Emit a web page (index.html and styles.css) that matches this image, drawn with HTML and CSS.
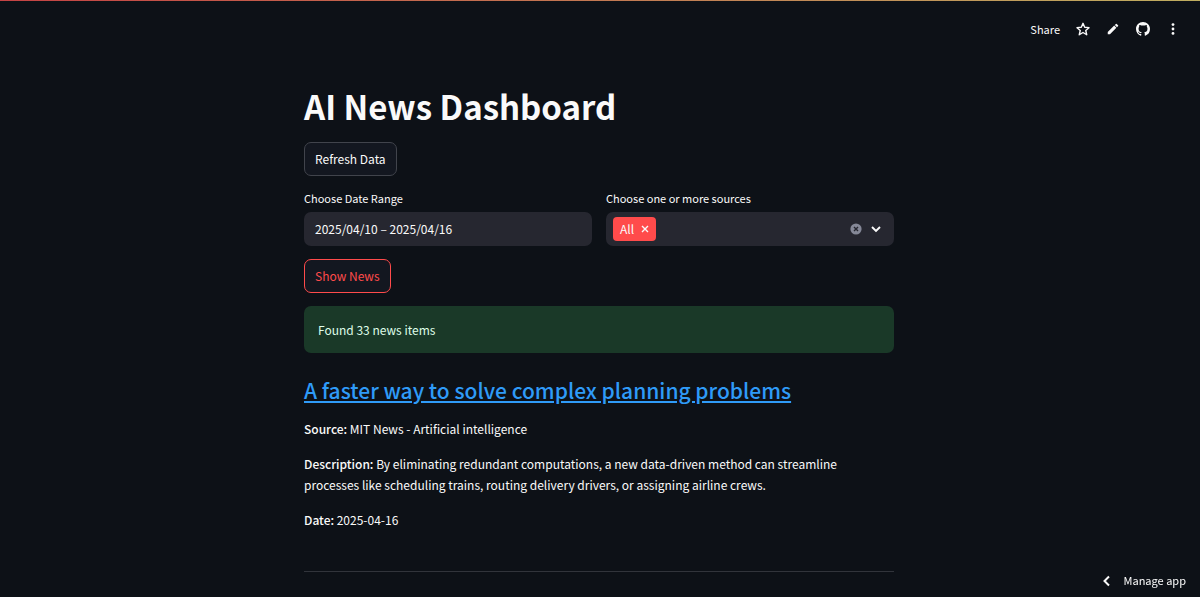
FILE: index.html
```html
<!DOCTYPE html>
<html lang="en">
<head>
<meta charset="utf-8">
<meta name="viewport" content="width=device-width, initial-scale=1">
<title>AI News Dashboard</title>
<link rel="stylesheet" href="styles.css">
</head>
<body>
<div class="decoration"></div>
<header class="toolbar">
  <button class="tool share" type="button">Share</button>
  <button class="tool" type="button" aria-label="Favorite">
    <svg width="14" height="14" viewBox="0 0 24 24" fill="none" stroke="currentColor" stroke-width="2.4" stroke-linejoin="round"><path d="M12 2.2l2.9 6.9 7.4.6-5.6 4.9 1.7 7.3-6.4-3.9-6.4 3.9 1.7-7.3-5.6-4.9 7.4-.6z"/></svg>
  </button>
  <button class="tool" type="button" aria-label="Edit">
    <svg width="14" height="14" viewBox="0 0 24 24" fill="currentColor"><path d="M3 17.2V21h3.8L17.8 9.9l-3.7-3.7zM20.7 7c.4-.4.4-1 0-1.4l-2.3-2.3a1 1 0 0 0-1.4 0l-1.9 1.8 3.8 3.8z"/></svg>
  </button>
  <button class="tool" type="button" aria-label="View source on GitHub">
    <svg width="14" height="14" viewBox="0 0 16 16" fill="currentColor"><path d="M8 0C3.58 0 0 3.58 0 8c0 3.54 2.29 6.53 5.47 7.59.4.07.55-.17.55-.38 0-.19-.01-.82-.01-1.49-2.01.37-2.53-.49-2.69-.94-.09-.23-.48-.94-.82-1.13-.28-.15-.68-.52-.01-.53.63-.01 1.08.58 1.23.82.72 1.21 1.87.87 2.33.66.07-.52.28-.87.51-1.07-1.78-.2-3.64-.89-3.64-3.95 0-.87.31-1.59.82-2.15-.08-.2-.36-1.02.08-2.12 0 0 .67-.21 2.2.82a7.6 7.6 0 0 1 4 0c1.53-1.04 2.2-.82 2.2-.82.44 1.1.16 1.92.08 2.12.51.56.82 1.27.82 2.15 0 3.07-1.87 3.75-3.65 3.95.29.25.54.73.54 1.48 0 1.07-.01 1.93-.01 2.2 0 .21.15.46.55.38A8.01 8.01 0 0 0 16 8c0-4.42-3.58-8-8-8z"/></svg>
  </button>
  <button class="tool" type="button" aria-label="Main menu">
    <svg width="14" height="14" viewBox="0 0 14 14" fill="currentColor"><circle cx="7" cy="2.6" r="1.4"/><circle cx="7" cy="7" r="1.4"/><circle cx="7" cy="11.4" r="1.4"/></svg>
  </button>
</header>
<main class="page">
  <div class="content">
    <h1 class="title">AI News Dashboard</h1>
    <button class="button" type="button">Refresh Data</button>
    <div class="filters">
      <div class="field">
        <label class="label" for="dates">Choose Date Range</label>
        <input class="control date" id="dates" type="text" value="2025/04/10 – 2025/04/16">
      </div>
      <div class="field">
        <label class="label" for="sources">Choose one or more sources</label>
        <div class="control multiselect">
          <span class="tag"><span class="name">All</span>
            <button class="icon" type="button" aria-label="Remove All">
              <svg width="8" height="8" viewBox="0 0 8 8" fill="none" stroke="currentColor" stroke-width="1.4"><path d="M1 1l6 6M7 1L1 7"/></svg>
            </button>
          </span>
          <input class="search" id="sources" type="text" role="combobox" aria-expanded="false">
          <button class="icon clear" type="button" aria-label="Clear all">
            <svg width="12" height="12" viewBox="0 0 12 12"><circle cx="6" cy="6" r="5.6" fill="#858897"/><path d="M4 4l4 4M8 4L4 8" stroke="#262730" stroke-width="1.4"/></svg>
          </button>
          <button class="icon" type="button" aria-label="Open">
            <svg width="10" height="10" viewBox="0 0 10 10" fill="none" stroke="currentColor" stroke-width="1.9"><path d="M1 3l4 4 4-4"/></svg>
          </button>
        </div>
      </div>
    </div>
    <button class="button active" type="button">Show News</button>
    <div class="alert" role="status">Found 33 news items</div>
    <article class="story">
      <h3 class="headline"><a class="link" href="#story">A faster way to solve complex planning problems</a></h3>
      <p class="text"><strong class="term">Source:</strong> MIT News - Artificial intelligence</p>
      <p class="text"><strong class="term">Description:</strong> By eliminating redundant computations, a new data-driven method can streamline processes like scheduling trains, routing delivery drivers, or assigning airline crews.</p>
      <p class="text"><strong class="term">Date:</strong> 2025-04-16</p>
    </article>
    <hr class="divider">
  </div>
</main>
<button class="manage" type="button">
  <svg width="10" height="12" viewBox="0 0 10 12" fill="none" stroke="currentColor" stroke-width="2"><path d="M7 1.5L2.5 6 7 10.5"/></svg>
  Manage app
</button>
</body>
</html>
```
FILE: styles.css
```css
* { box-sizing: border-box; }
body {
  margin: 0;
  background: #0d1117;
  color: #fafafa;
  font-family: "Noto Sans CJK SC", "Source Sans Pro", sans-serif;
  font-size: 12px;
  line-height: 21px;
}
button, input { font: inherit; color: inherit; }
button { cursor: pointer; }
svg { display: block; }
.decoration {
  height: 1px;
  background: linear-gradient(90deg, #c54344, #bfae60);
}
.toolbar {
  display: flex;
  justify-content: flex-end;
  align-items: center;
  gap: 16px;
  height: 56px;
  padding-right: 20px;
}
.tool {
  border: 0;
  padding: 0;
  background: none;
}
.share { font-size: 11px; }
.page { padding-right: 2px; }
.content {
  max-width: 590px;
  margin: 0 auto;
}
.title {
  margin: 0;
  padding: 26px 0 13px;
  font-size: 33px;
  line-height: 46px;
  font-weight: 700;
}
.button {
  display: block;
  height: 34px;
  padding: 0 10px 2px;
  border: 1px solid #41444c;
  border-radius: 7px;
  background: #131720;
}
.active {
  border-color: #ff4b4b;
  color: #ff4b4b;
}
.filters {
  display: grid;
  grid-template-columns: 1fr 1fr;
  gap: 14px;
  margin: 14px 0 13px;
}
.label {
  display: block;
  padding-bottom: 6px;
  font-size: 11px;
  line-height: 16px;
}
.control {
  width: 100%;
  height: 34px;
  border: 0;
  border-radius: 7px;
  background: #262730;
}
.date { padding: 0 11px 1px; }
.multiselect {
  display: flex;
  align-items: center;
  padding: 0 13px 0 7px;
}
.tag {
  display: flex;
  align-items: center;
  gap: 7px;
  height: 24px;
  padding: 0 7px;
  border-radius: 4px;
  background: #ff4b4b;
}
.name { padding-bottom: 2px; }
.search {
  flex: 1;
  min-width: 0;
  border: 0;
  background: none;
}
.icon {
  border: 0;
  padding: 0;
  background: none;
}
.clear { margin-right: 9px; }
.alert {
  margin-top: 13px;
  padding: 13px 14px;
  border-radius: 7px;
  background: #1a3928;
  color: #dffde9;
}
.headline {
  margin: 0;
  padding: 23px 0 14px;
  font-size: 21px;
  line-height: 28px;
  font-weight: 500;
}
.link {
  color: #2f9bf8;
  text-decoration: underline;
}
.text { margin: 0 0 14px; }
.term { font-weight: 500; }
.divider {
  margin: 41px 0 0;
  border: 0;
  border-top: 1px solid #31343b;
}
.manage {
  position: fixed;
  right: 0;
  bottom: 0;
  display: flex;
  align-items: center;
  gap: 12px;
  height: 32px;
  padding: 0 14px 1px;
  border: 0;
  background: none;
  font-size: 11px;
}
```
